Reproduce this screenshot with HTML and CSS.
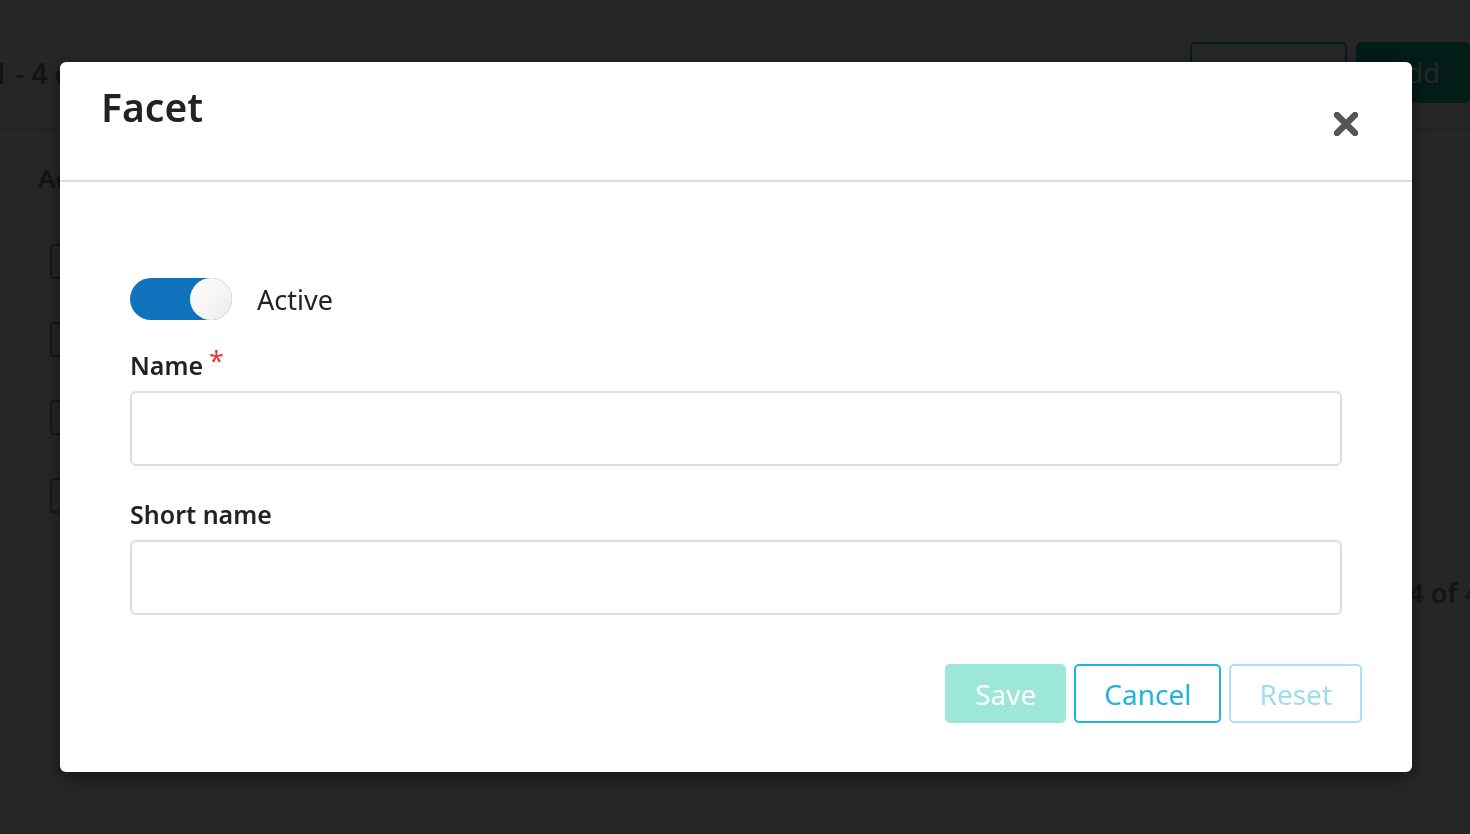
FILE: index.html
```html
<!DOCTYPE html>
<html lang="en">

<head>
    <meta charset="UTF-8">
    <meta name="viewport" content="width=device-width, initial-scale=1.0">
    <title>Facets</title>
    <link rel="stylesheet" href="styles.css">
</head>

<body>
    <div class="page">
        <div class="toolbar">
            <div class="count">1 - 4 of 4</div>
            <div class="actions">
                <div class="btn-outline">Refresh</div>
                <div class="btn-add">Add</div>
            </div>
        </div>
        <div class="list">
            <div class="list-head">Active</div>
            <div class="list-rows">
                <div class="list-row"><span class="row-btn">&#9662;</span></div>
                <div class="list-row"><span class="row-btn">&#9662;</span></div>
                <div class="list-row"><span class="row-btn">&#9662;</span></div>
                <div class="list-row"><span class="row-btn">&#9662;</span></div>
            </div>
        </div>
        <div class="pager">1 - 4 of 4</div>
    </div>

    <div class="overlay">
        <div class="modal">
            <div class="modal-header">
                <h1 class="modal-title">Facet</h1>
                <button class="close-btn" aria-label="Close">
                    <svg width="24" height="24" viewBox="0 0 24 24">
                        <path d="M3 3 L21 21 M21 3 L3 21" stroke="#555" stroke-width="6.5" stroke-linecap="round" fill="none"/>
                    </svg>
                </button>
            </div>

            <div class="modal-body">
                <div class="switch-row">
                    <div class="switch on"><div class="knob"></div></div>
                    <span class="switch-label">Active</span>
                </div>

                <div class="field">
                    <label class="field-label">Name<span class="required">*</span></label>
                    <input class="field-input" type="text">
                </div>

                <div class="field">
                    <label class="field-label">Short name</label>
                    <input class="field-input" type="text">
                </div>
            </div>

            <div class="modal-footer">
                <button class="btn btn-save">Save</button>
                <button class="btn btn-cancel">Cancel</button>
                <button class="btn btn-reset">Reset</button>
            </div>
        </div>
    </div>
</body>

</html>
```

FILE: styles.css
```css
body {
    margin: 0;
    height: 100vh;
    overflow: hidden;
    background-color: #fff;
    font-family: "Noto Sans", "Open Sans", sans-serif;
    color: #222;
}

/* page behind the modal */
.page {
    height: 100%;
}

.toolbar {
    display: flex;
    justify-content: space-between;
    align-items: flex-start;
    height: 130px;
    box-sizing: border-box;
    padding-top: 42px;
    border-bottom: 1px solid #ccc;
}

.count {
    margin-left: -8px;
    margin-top: 12px;
    font-size: 28px;
    font-weight: 600;
    color: #888;
    white-space: nowrap;
}

.actions {
    display: flex;
    gap: 9px;
}

.btn-outline,
.btn-add {
    height: 61px;
    box-sizing: border-box;
    padding: 0 30px;
    border-radius: 5px;
    font-size: 28px;
    line-height: 57px;
}

.btn-outline {
    width: 157px;
    border: 2px solid #1eb4e0;
    color: #1eb4e0;
}

.btn-add {
    width: 114px;
    border: 2px solid #14bba0;
    background-color: #14bba0;
    color: #fff;
}

.list {
    padding-left: 38px;
}

.list-head {
    padding-top: 30px;
    font-size: 26px;
    font-weight: 600;
    color: #888;
}

.list-rows {
    padding-top: 26px;
}

.list-row {
    height: 78px;
    padding-left: 12px;
    display: flex;
    align-items: center;
}

.row-btn {
    width: 40px;
    height: 31px;
    border: 2px solid #999;
    border-radius: 4px;
    font-size: 18px;
    line-height: 31px;
    text-align: center;
}

.pager {
    text-align: right;
    margin-top: 40px;
    margin-right: -10px;
    font-size: 27px;
    font-weight: 600;
    color: #888;
    white-space: nowrap;
}

/* modal */
.overlay {
    position: fixed;
    inset: 0;
    background-color: rgba(0, 0, 0, 0.85);
    display: flex;
    justify-content: center;
    align-items: flex-start;
    padding-top: 62px;
    padding-left: 2px;
}

.modal {
    width: 1352px;
    background-color: #fff;
    border-radius: 6px;
    box-shadow: 0 5px 18px rgba(0, 0, 0, 0.5);
}

.modal-header {
    display: flex;
    justify-content: space-between;
    align-items: flex-start;
    height: 120px;
    box-sizing: border-box;
    padding: 0 54px 0 41px;
    border-bottom: 2px solid #ddd;
}

.modal-title {
    margin: 0;
    padding-top: 21px;
    font-size: 39px;
    font-weight: 600;
    line-height: 48px;
    color: #222;
}

.close-btn {
    margin-top: 50px;
    padding: 0;
    border: none;
    background: none;
    cursor: pointer;
}

.close-btn svg {
    display: block;
}

.modal-body {
    padding: 96px 70px 49px;
}

.switch-row {
    display: flex;
    align-items: center;
    gap: 25px;
}

.switch {
    position: relative;
    width: 102px;
    height: 42px;
    border-radius: 21px;
    background-color: #ccc;
}

.switch.on {
    background-color: #0e72bd;
}

.knob {
    position: absolute;
    top: 0;
    left: 0;
    width: 42px;
    height: 42px;
    border-radius: 50%;
    background: linear-gradient(135deg, #ffffff, #ececec);
}

.switch.on .knob {
    left: 60px;
}

.switch-label {
    font-size: 27px;
    color: #222;
}

.field {
    display: flex;
    flex-direction: column;
    gap: 9px;
    margin-top: 28px;
}

.field + .field {
    margin-top: 31px;
}

.field-label {
    font-size: 25px;
    font-weight: 600;
    line-height: 34px;
    color: #222;
}

.required {
    position: relative;
    top: -4px;
    margin-left: 6px;
    font-size: 27px;
    font-weight: 400;
    color: #e53935;
}

.field-input {
    height: 75px;
    box-sizing: border-box;
    border: 2px solid #ddd;
    border-radius: 6px;
    font-family: inherit;
    font-size: 24px;
    padding: 0 16px;
}

.modal-footer {
    display: flex;
    justify-content: flex-end;
    gap: 8px;
    padding: 0 50px 49px;
}

.btn {
    height: 59px;
    padding: 0 28px;
    border: 2px solid;
    border-radius: 5px;
    font-family: inherit;
    font-size: 28px;
    background-color: #fff;
    cursor: pointer;
}

.btn-save {
    border-color: #9de6da;
    background-color: #9de6da;
    color: #fff;
}

.btn-cancel {
    border-color: #1eb4e0;
    color: #1eb4e0;
}

.btn-reset {
    border-color: #a8e3f3;
    color: #9fdcef;
}
```
